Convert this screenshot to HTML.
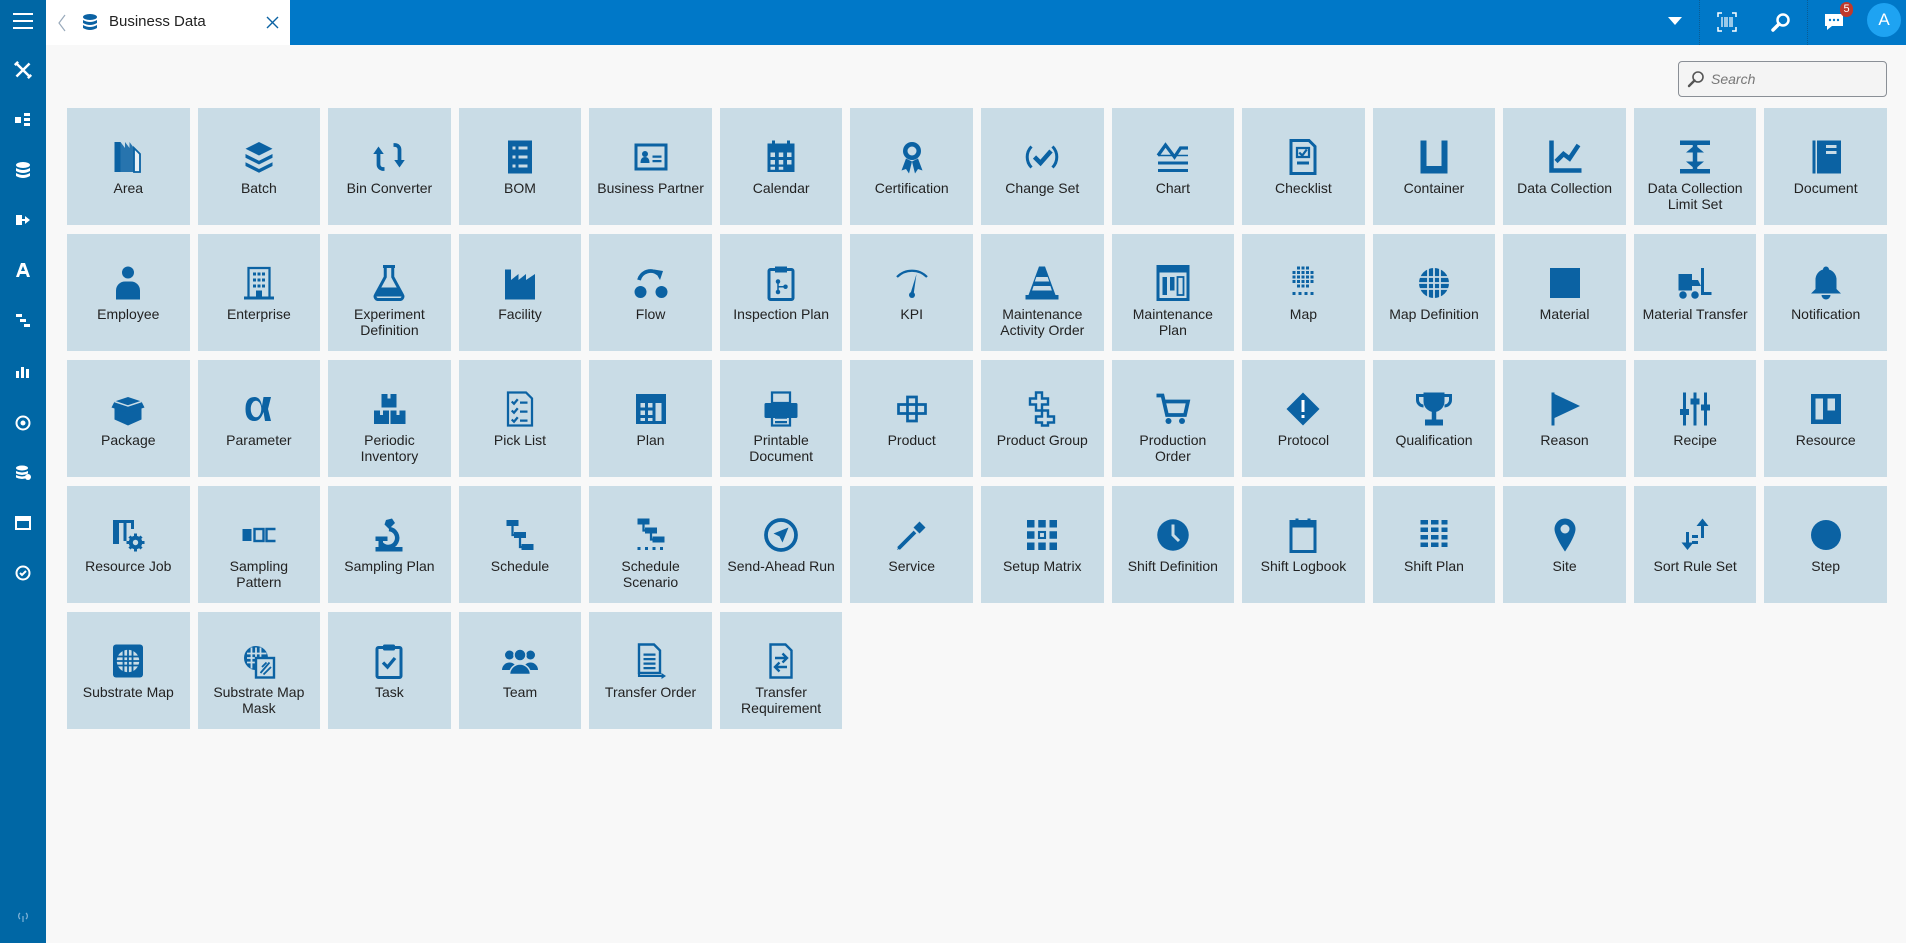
<!DOCTYPE html>
<html><head><meta charset="utf-8">
<style>
*{box-sizing:border-box;margin:0;padding:0}
body{width:1906px;height:943px;overflow:hidden;background:#f8f8f8;font-family:"Liberation Sans",sans-serif;position:relative}
#side{position:absolute;left:0;top:0;width:46px;height:943px;background:#0067a5}
#side svg{position:absolute;left:12px;width:22px;height:22px}
#top{position:absolute;left:46px;top:0;right:0;height:45px;background:#0078c8}
#tab{position:absolute;left:46px;top:0;width:244px;height:45px;background:#fff}
#tab .t{position:absolute;left:63px;top:13px;font-size:15px;color:#222}
.hdiv{position:absolute;top:0;height:45px;border-left:1px dotted #0a5c95}
#search{position:absolute;left:1678px;top:61px;width:209px;height:36px;border:1px solid #8a8f96;border-radius:4px;background:#f4f4f4}
#search span{position:absolute;left:32px;top:9px;font-size:14px;font-style:italic;color:#777}
#grid{position:absolute;left:67px;top:108px;width:1820px;display:grid;grid-template-columns:repeat(14,1fr);column-gap:8px;row-gap:9px}
.tile{height:117px;background:#c9dce6;position:relative;text-align:center}
.tile svg{position:absolute;left:50%;top:31px;margin-left:-18px;width:36px;height:36px;fill:#0b62a3;stroke:none}
.tile .l{position:absolute;left:0;right:0;top:72px;font-size:14px;line-height:16px;color:#222;white-space:nowrap}
.tile svg .s,.s{fill:none;stroke:#0b62a3;stroke-width:2}
</style></head><body>
<div id="top"></div>
<div id="tab">
<svg style="position:absolute;left:12px;top:14px" width="8" height="18" viewBox="0 0 8 18"><path d="M7 1L1 9l6 8" fill="none" stroke="#9ab" stroke-width="1.2"/></svg>
<svg style="position:absolute;left:36px;top:14px" width="16" height="17" viewBox="0 0 16 17"><ellipse cx="8" cy="3" rx="7" ry="3" fill="#0b62a3"/><path d="M1 6q7 4 14 0v3q-7 4-14 0zM1 11q7 4 14 0v3q-7 4-14 0z" fill="#0b62a3"/></svg>
<div class="t">Business Data</div>
<svg style="position:absolute;left:220px;top:16px" width="13" height="13" viewBox="0 0 13 13"><path d="M1 1l11 11M12 1L1 12" stroke="#0b62a3" stroke-width="1.4"/></svg>
</div>
<svg style="position:absolute;left:1668px;top:17px" width="14" height="9" viewBox="0 0 14 9"><path d="M0 0h14L7 8z" fill="#fff"/></svg>
<div class="hdiv" style="left:1699px"></div>
<svg style="position:absolute;left:1717px;top:12px" width="20" height="20" viewBox="0 0 20 20" fill="none" stroke="#fff" stroke-width="1.5"><path d="M1 5V1h4M15 1h4v4M19 15v4h-4M5 19H1v-4"/><path d="M5 5v10M8 5v10M10 5v10M13 5v10M15 5v10" stroke-width="1.2"/></svg>
<svg style="position:absolute;left:1771px;top:12px" width="20" height="20" viewBox="0 0 20 20"><circle cx="12" cy="8" r="5.5" fill="none" stroke="#fff" stroke-width="2.5"/><path d="M8 12l-6 6" stroke="#fff" stroke-width="3.5" stroke-linecap="round"/></svg>
<div class="hdiv" style="left:1807px"></div>
<svg style="position:absolute;left:1824px;top:12px" width="20" height="20" viewBox="0 0 20 20"><path d="M1 2h18v12H8l-5 4v-4H1z" fill="#fff"/><circle cx="6" cy="8" r="1.2" fill="#0078c8"/><circle cx="10" cy="8" r="1.2" fill="#0078c8"/><circle cx="14" cy="8" r="1.2" fill="#0078c8"/></svg>
<div style="position:absolute;left:1840px;top:2px;width:13px;height:15px;border-radius:7px;background:#c0392b;color:#fff;font-size:11px;text-align:center;line-height:15px">5</div>
<div style="position:absolute;left:1867px;top:3px;width:34px;height:34px;border-radius:50%;background:#1ea3f2;color:#fff;font-size:17px;text-align:center;line-height:34px">A</div>
<div id="search"><svg style="position:absolute;left:8px;top:8px" width="18" height="18" viewBox="0 0 18 18"><circle cx="11" cy="7" r="5" fill="none" stroke="#555" stroke-width="1.6"/><path d="M7.5 10.5L2 16" stroke="#555" stroke-width="2.4" stroke-linecap="round"/></svg><span>Search</span></div>
<div id="side">
<svg style="top:10px" viewBox="0 0 22 22"><path d="M1 4h20M1 11h20M1 18h20" stroke="#fff" stroke-width="2"/></svg>
<svg style="top:59px;width:18px;left:14px" viewBox="0 0 22 22"><path d="M3 3l16 16M19 3L3 19M1 5l4-4M17 21l4-4" stroke="#fff" stroke-width="3"/></svg>
<svg style="top:109px;width:16px;left:15px" viewBox="0 0 16 16" fill="#fff"><rect x="0" y="5" width="6" height="6"/><rect x="9" y="1" width="6" height="3"/><rect x="9" y="6" width="6" height="3"/><rect x="9" y="11" width="6" height="3"/></svg>
<svg style="top:159px;width:16px;left:15px" viewBox="0 0 16 16" fill="#fff"><ellipse cx="8" cy="3" rx="7" ry="3"/><path d="M1 6q7 4 14 0v3q-7 4-14 0zM1 11q7 4 14 0v3q-7 4-14 0z"/></svg>
<svg style="top:209px;width:16px;left:15px" viewBox="0 0 16 16" fill="#fff"><path d="M1 3h6v4h3V4l5 4-5 4V9H7v4H1z"/></svg>
<svg style="top:259px;width:16px;left:15px" viewBox="0 0 16 16" fill="#fff"><path d="M6 1h4l5 14h-3l-1-3H5l-1 3H1zM6 9h4L8 4z"/></svg>
<svg style="top:309px;width:16px;left:15px" viewBox="0 0 16 16" fill="#fff"><rect x="1" y="2" width="6" height="3"/><rect x="5" y="7" width="6" height="3"/><rect x="9" y="12" width="6" height="3"/></svg>
<svg style="top:360px;width:16px;left:15px" viewBox="0 0 16 16" fill="#fff"><rect x="1" y="8" width="3" height="7"/><rect x="6" y="4" width="3" height="11"/><rect x="11" y="6" width="3" height="9"/></svg>
<svg style="top:412px;width:16px;left:15px" viewBox="0 0 16 16"><circle cx="8" cy="8" r="6.5" fill="none" stroke="#fff" stroke-width="2"/><circle cx="8" cy="8" r="2.5" fill="#fff"/></svg>
<svg style="top:462px;width:16px;left:15px" viewBox="0 0 16 16" fill="#fff"><ellipse cx="7" cy="3" rx="6" ry="2.5"/><path d="M1 6q6 3 12 0v2.5q-6 3-12 0zM1 10q6 3 12 0v2.5q-6 3-12 0z"/><circle cx="13" cy="12" r="3"/></svg>
<svg style="top:512px;width:16px;left:15px" viewBox="0 0 16 16"><rect x="1" y="2" width="14" height="12" fill="none" stroke="#fff" stroke-width="2"/><rect x="1" y="2" width="14" height="4" fill="#fff"/></svg>
<svg style="top:562px;width:16px;left:15px" viewBox="0 0 16 16"><circle cx="8" cy="8" r="6.5" fill="none" stroke="#fff" stroke-width="2"/><path d="M5 8l2 2 4-4" stroke="#fff" stroke-width="2" fill="none"/></svg>
<svg style="top:905px;width:12px;left:17px" viewBox="0 0 12 12"><path d="M6 6v6M3 3a4 4 0 0 0 0 6M9 3a4 4 0 0 1 0 6" stroke="#7fb2d6" stroke-width="1.2" fill="none"/></svg>
</div>

<div id="grid">
<div class="tile"><svg viewBox="0 0 24 24"><path d="M3 2h4v20H3z"/><path d="M7 2l3 4V2l3 4V2l3 4v16H7z" opacity=".85"/><path d="M16 6l4 4v12h-4z" fill="#e8f0f5"/><path d="M16 6l4 4v12h-4z" class="s" style="stroke-width:1.2"/></svg><div class="l">Area</div></div>
<div class="tile"><svg viewBox="0 0 24 24"><path d="M12 2l9 4.5-9 4.5-9-4.5z"/><path d="M3 10l9 4.5 9-4.5v2.5l-9 4.5-9-4.5zM3 15.5l9 4.5 9-4.5V18l-9 4.5L3 18z"/></svg><div class="l">Batch</div></div>
<div class="tile"><svg viewBox="0 0 24 24"><path d="M9 20H8a3 3 0 0 1-3-3V9" class="s" style="stroke-width:2.5"/><path d="M1.5 10L5 5l3.5 5z"/><path d="M15 4h1a3 3 0 0 1 3 3v8" class="s" style="stroke-width:2.5"/><path d="M15.5 14L19 19l3.5-5z"/></svg><div class="l">Bin Converter</div></div>
<div class="tile"><svg viewBox="0 0 24 24"><rect x="4" y="1" width="16" height="22"/><g fill="#c9dce6"><rect x="7" y="5" width="2" height="2"/><rect x="11" y="5" width="6" height="2"/><rect x="7" y="11" width="2" height="2"/><rect x="11" y="11" width="6" height="2"/><rect x="7" y="17" width="2" height="2"/><rect x="11" y="17" width="6" height="2"/></g></svg><div class="l">BOM</div></div>
<div class="tile"><svg viewBox="0 0 24 24"><rect x="2" y="4" width="20" height="16" class="s"/><circle cx="8" cy="10" r="2"/><path d="M5 16q0-4 3-4t3 4z"/><rect x="13" y="11" width="6" height="1.5"/><rect x="13" y="14" width="6" height="1.5"/></svg><div class="l">Business Partner</div></div>
<div class="tile"><svg viewBox="0 0 24 24"><rect x="3" y="3" width="18" height="19"/><g fill="#c9dce6"><rect x="5" y="9" width="3" height="3"/><rect x="10.5" y="9" width="3" height="3"/><rect x="16" y="9" width="3" height="3"/><rect x="5" y="14" width="3" height="3"/><rect x="10.5" y="14" width="3" height="3"/><rect x="16" y="14" width="3" height="3"/><rect x="5" y="18.5" width="3" height="2"/><rect x="10.5" y="18.5" width="3" height="2"/></g><rect x="6" y="1" width="2" height="4"/><rect x="16" y="1" width="2" height="4"/></svg><div class="l">Calendar</div></div>
<div class="tile"><svg viewBox="0 0 24 24"><circle cx="12" cy="8" r="6"/><circle cx="12" cy="8" r="3" fill="#c9dce6"/><path d="M8 13l-3 8 3-1 2 3 2-8zM16 13l3 8-3-1-2 3-2-8z"/></svg><div class="l">Certification</div></div>
<div class="tile"><svg viewBox="0 0 24 24"><path d="M5 5a10 10 0 0 0 0 14M19 5a10 10 0 0 1 0 14" class="s"/><path d="M7 12l4 4 7-8" class="s" style="stroke-width:3"/></svg><div class="l">Change Set</div></div>
<div class="tile"><svg viewBox="0 0 24 24"><path d="M2 11l5-7 6 8 4-6h5" class="s" style="stroke-width:2.2"/><rect x="2" y="15" width="20" height="2"/><rect x="2" y="20" width="20" height="2"/><path d="M2 11h20" class="s" style="stroke-width:1"/></svg><div class="l">Chart</div></div>
<div class="tile"><svg viewBox="0 0 24 24"><path d="M4 1h12l4 4v18H4z" class="s"/><rect x="8" y="6" width="8" height="6" class="s" style="stroke-width:1.5"/><path d="M9.5 9l2 2 3-4" class="s" style="stroke-width:1.5"/><rect x="8" y="15" width="8" height="2"/></svg><div class="l">Checklist</div></div>
<div class="tile"><svg viewBox="0 0 24 24"><path d="M3 1h4v17h10V1h4v22H3z"/></svg><div class="l">Container</div></div>
<div class="tile"><svg viewBox="0 0 24 24"><path d="M3 1v20h20" class="s" style="stroke-width:3"/><path d="M6 15l5-5 4 3 6-9" class="s" style="stroke-width:3"/></svg><div class="l">Data Collection</div></div>
<div class="tile"><svg viewBox="0 0 24 24"><rect x="2" y="1" width="20" height="3"/><rect x="2" y="20" width="20" height="3"/><path d="M12 4v16" class="s" style="stroke-width:3"/><path d="M6 9l6-5 6 5zM6 15l6 5 6-5z"/></svg><div class="l">Data Collection<br>Limit Set</div></div>
<div class="tile"><svg viewBox="0 0 24 24"><rect x="3" y="1" width="2" height="22"/><rect x="6" y="1" width="16" height="22"/><rect x="12" y="4" width="7" height="2" fill="#c9dce6"/><rect x="12" y="8" width="7" height="2" fill="#c9dce6"/></svg><div class="l">Document</div></div>

<div class="tile"><svg viewBox="0 0 24 24"><circle cx="12" cy="5" r="4"/><path d="M4 23v-6a6 6 0 0 1 6-6h4a6 6 0 0 1 6 6v6z"/></svg><div class="l">Employee</div></div>
<div class="tile"><svg viewBox="0 0 24 24"><path d="M5 2h14v20H5z" class="s" style="stroke-width:1.5"/><g><rect x="8" y="5" width="2" height="2"/><rect x="11" y="5" width="2" height="2"/><rect x="14" y="5" width="2" height="2"/><rect x="8" y="9" width="2" height="2"/><rect x="11" y="9" width="2" height="2"/><rect x="14" y="9" width="2" height="2"/><rect x="8" y="13" width="2" height="2"/><rect x="11" y="13" width="2" height="2"/><rect x="14" y="13" width="2" height="2"/><rect x="10" y="17" width="4" height="5"/><rect x="2" y="21" width="20" height="2"/></g></svg><div class="l">Enterprise</div></div>
<div class="tile"><svg viewBox="0 0 24 24"><path d="M8 1h8M9.5 1v7L3 20a2 2 0 0 0 2 3h14a2 2 0 0 0 2-3L14.5 8V1" class="s"/><path d="M6 15h12l3 6H3z"/></svg><div class="l">Experiment<br>Definition</div></div>
<div class="tile"><svg viewBox="0 0 24 24"><path d="M2 23V3h4v7l5-4v4l5-4v4l6-4v17z"/></svg><div class="l">Facility</div></div>
<div class="tile"><svg viewBox="0 0 24 24"><circle cx="5" cy="18" r="4"/><circle cx="19" cy="18" r="4"/><path d="M4 10a8 8 0 0 1 13-4" class="s" style="stroke-width:2.5"/><path d="M14 3l6 1-2 6z"/></svg><div class="l">Flow</div></div>
<div class="tile"><svg viewBox="0 0 24 24"><rect x="4" y="3" width="16" height="20" rx="1" class="s"/><rect x="8" y="1" width="8" height="4"/><circle cx="10" cy="11" r="1.5"/><circle cx="10" cy="18" r="1.5"/><circle cx="15" cy="14.5" r="1.5"/><path d="M10 11v7M10 14.5h5" class="s" style="stroke-width:1"/></svg><div class="l">Inspection Plan</div></div>
<div class="tile"><svg viewBox="0 0 24 24"><path d="M2 8a14 14 0 0 1 20 0" class="s" style="stroke-width:1.5"/><path d="M15 6l-4 13 2 1z"/><circle cx="12" cy="20" r="2"/></svg><div class="l">KPI</div></div>
<div class="tile"><svg viewBox="0 0 24 24"><path d="M10 1h4l7 19H3z"/><path d="M8.2 8h7.6l1 3H7.2zM6.4 14h11.2l1 3H5.4z" fill="#c9dce6"/><rect x="1" y="20" width="22" height="3"/></svg><div class="l">Maintenance<br>Activity Order</div></div>
<div class="tile"><svg viewBox="0 0 24 24"><rect x="2" y="1" width="20" height="22" class="s"/><rect x="2" y="1" width="20" height="4"/><rect x="5" y="8" width="3" height="12"/><rect x="10" y="8" width="3" height="9"/><rect x="15" y="8" width="4" height="12" class="s" style="stroke-width:1.2"/></svg><div class="l">Maintenance<br>Plan</div></div>
<div class="tile"><svg viewBox="0 0 24 24"><g><rect x="8" y="1" width="2" height="2"/><rect x="11" y="1" width="2" height="2"/><rect x="14" y="1" width="2" height="2"/><rect x="5" y="4" width="2" height="2"/><rect x="8" y="4" width="2" height="2"/><rect x="11" y="4" width="2" height="2"/><rect x="14" y="4" width="2" height="2"/><rect x="17" y="4" width="2" height="2"/><rect x="5" y="7" width="2" height="2"/><rect x="8" y="7" width="2" height="2"/><rect x="11" y="7" width="2" height="2"/><rect x="14" y="7" width="2" height="2"/><rect x="17" y="7" width="2" height="2"/><rect x="5" y="10" width="2" height="2"/><rect x="8" y="10" width="2" height="2"/><rect x="11" y="10" width="2" height="2"/><rect x="14" y="10" width="2" height="2"/><rect x="17" y="10" width="2" height="2"/><rect x="8" y="13" width="2" height="2"/><rect x="11" y="13" width="2" height="2"/><rect x="14" y="13" width="2" height="2"/><rect x="5" y="18" width="2" height="2"/><rect x="9" y="18" width="2" height="2"/><rect x="13" y="18" width="2" height="2"/><rect x="17" y="18" width="2" height="2"/></g></svg><div class="l">Map</div></div>
<div class="tile"><svg viewBox="0 0 24 24"><circle cx="12" cy="12" r="10"/><path d="M8 2v20M12 2v20M16 2v20M2 8h20M2 12h20M2 16h20" stroke="#c9dce6" stroke-width="1.2"/></svg><div class="l">Map Definition</div></div>
<div class="tile"><svg viewBox="0 0 24 24"><rect x="2" y="2" width="20" height="20"/></svg><div class="l">Material</div></div>
<div class="tile"><svg viewBox="0 0 24 24"><rect x="1" y="6" width="9" height="11"/><path d="M10 10h4l2 4h-6z"/><path d="M17 2v17h6" class="s"/><circle cx="4" cy="20" r="2.5"/><circle cx="12" cy="20" r="2.5"/></svg><div class="l">Material Transfer</div></div>
<div class="tile"><svg viewBox="0 0 24 24"><path d="M12 1a2 2 0 0 1 2 2 7 7 0 0 1 5 7v6l3 3H2l3-3v-6a7 7 0 0 1 5-7 2 2 0 0 1 2-2z"/><path d="M9 20a3 3 0 0 0 6 0z"/></svg><div class="l">Notification</div></div>

<div class="tile"><svg viewBox="0 0 24 24"><path d="M12 4l9 3v12l-9 4-9-4V7z"/><path d="M3 7l-2 4 9 3 2-4zM21 7l2 4-9 3-2-4z"/><path d="M3 7l9 3 9-3" stroke="#c9dce6" stroke-width="1" fill="none"/></svg><div class="l">Package</div></div>
<div class="tile"><svg viewBox="0 0 24 24"><path d="M15 4l-1 6q-1-6-5-6-6 0-6 8t6 8q4 0 6-6l1 6h4l-2-8 2-8z"/><ellipse cx="10" cy="12" rx="3.5" ry="5.5" fill="#c9dce6"/></svg><div class="l">Parameter</div></div>
<div class="tile"><svg viewBox="0 0 24 24"><rect x="7" y="2" width="10" height="9"/><rect x="2" y="13" width="10" height="9"/><rect x="13" y="13" width="10" height="9"/><rect x="11" y="2" width="2" height="3" fill="#c9dce6"/><rect x="6" y="13" width="2" height="3" fill="#c9dce6"/><rect x="17" y="13" width="2" height="3" fill="#c9dce6"/></svg><div class="l">Periodic<br>Inventory</div></div>
<div class="tile"><svg viewBox="0 0 24 24"><path d="M4 1h12l4 4v18H4z" class="s" style="stroke-width:1.5"/><path d="M6.5 7l1.5 1.5 2.5-3M6.5 13l1.5 1.5 2.5-3M6.5 19l1.5 1.5 2.5-3" class="s" style="stroke-width:1.5"/><rect x="12" y="7" width="5" height="1.5"/><rect x="12" y="13" width="5" height="1.5"/><rect x="12" y="19" width="5" height="1.5"/></svg><div class="l">Pick List</div></div>
<div class="tile"><svg viewBox="0 0 24 24"><rect x="2" y="2" width="20" height="20"/><g fill="#c9dce6"><rect x="5" y="8" width="3" height="3"/><rect x="10" y="8" width="3" height="3"/><rect x="5" y="13" width="3" height="3"/><rect x="10" y="13" width="3" height="3"/><rect x="5" y="18" width="3" height="2"/><rect x="10" y="18" width="3" height="2"/><rect x="15" y="8" width="4" height="12"/></g></svg><div class="l">Plan</div></div>
<div class="tile"><svg viewBox="0 0 24 24"><rect x="6" y="1" width="12" height="7" class="s" style="stroke-width:1.5"/><rect x="1" y="8" width="22" height="10" rx="1"/><rect x="6" y="14" width="12" height="9" fill="#c9dce6" class="s" style="stroke-width:1.5"/><rect x="8" y="17" width="8" height="1.5"/><rect x="8" y="20" width="8" height="1.5"/></svg><div class="l">Printable<br>Document</div></div>
<div class="tile"><svg viewBox="0 0 24 24"><path d="M9 4h6v5h6v6h-6v5H9v-5H3V9h6z" class="s" style="stroke-width:1.8"/><path d="M9 9h6v6H9z" class="s" style="stroke-width:1.8"/></svg><div class="l">Product</div></div>
<div class="tile"><svg viewBox="0 0 24 24"><path d="M8 1h4v4h4v4h-4v4H8V9H4V5h4z" class="s" style="stroke-width:1.6"/><path d="M12 13h4v4h4v4h-4v2h-4v-2H8v-4h4z" class="s" style="stroke-width:1.6"/></svg><div class="l">Product Group</div></div>
<div class="tile"><svg viewBox="0 0 24 24"><path d="M1 3h4l3 13h12l2-9H6" class="s" style="stroke-width:2.5"/><circle cx="9" cy="20" r="2"/><circle cx="18" cy="20" r="2"/></svg><div class="l">Production<br>Order</div></div>
<div class="tile"><svg viewBox="0 0 24 24"><path d="M12 1l11 11-11 11L1 12z"/><rect x="11" y="6" width="2" height="8" fill="#fff"/><rect x="11" y="16" width="2" height="2" fill="#fff"/></svg><div class="l">Protocol</div></div>
<div class="tile"><svg viewBox="0 0 24 24"><path d="M5 1h14v6a7 7 0 0 1-14 0z"/><path d="M5 3H1v3a4 4 0 0 0 4 4M19 3h4v3a4 4 0 0 1-4 4" class="s"/><rect x="10.5" y="13" width="3" height="6"/><rect x="6" y="19" width="12" height="4"/></svg><div class="l">Qualification</div></div>
<div class="tile"><svg viewBox="0 0 24 24"><rect x="3" y="1" width="2" height="22"/><path d="M5 2l17 8-17 8z"/></svg><div class="l">Reason</div></div>
<div class="tile"><svg viewBox="0 0 24 24"><rect x="4" y="1" width="2" height="22"/><rect x="11" y="1" width="2" height="22"/><rect x="18" y="1" width="2" height="22"/><rect x="2" y="12" width="6" height="4"/><rect x="9" y="5" width="6" height="4"/><rect x="16" y="9" width="6" height="4"/></svg><div class="l">Recipe</div></div>
<div class="tile"><svg viewBox="0 0 24 24"><rect x="2" y="2" width="20" height="20"/><rect x="5" y="5" width="5" height="14" fill="#c9dce6"/><rect x="13" y="5" width="5" height="8" fill="#c9dce6"/></svg><div class="l">Resource</div></div>

<div class="tile"><svg viewBox="0 0 24 24"><path d="M2 2h14v6h-2V4h-3v12H9V4H6v14H2z"/><circle cx="17" cy="17" r="4.5"/><path d="M17 11v12M11 17h12M13 13l8 8M21 13l-8 8" stroke="#0b62a3" stroke-width="2"/><circle cx="17" cy="17" r="1.8" fill="#c9dce6"/></svg><div class="l">Resource Job</div></div>
<div class="tile"><svg viewBox="0 0 24 24"><rect x="1" y="8" width="6" height="8"/><rect x="9" y="8" width="6" height="8" class="s" style="stroke-width:1.6"/><path d="M23 8h-6v8h6" class="s" style="stroke-width:1.6"/></svg><div class="l">Sampling<br>Pattern</div></div>
<div class="tile"><svg viewBox="0 0 24 24"><path d="M10 2l4-1 2 3-4 4-3-3z"/><path d="M12 8a6 6 0 1 1-5 10" class="s" style="stroke-width:3"/><rect x="3" y="13" width="8" height="3"/><rect x="3" y="20" width="18" height="3"/><rect x="5" y="16" width="3" height="5"/></svg><div class="l">Sampling Plan</div></div>
<div class="tile"><svg viewBox="0 0 24 24"><rect x="3" y="2" width="8" height="4"/><rect x="8" y="10" width="8" height="4"/><rect x="13" y="18" width="8" height="4"/><path d="M7 6v6h1M12 14v6h1" class="s" style="stroke-width:1.5"/></svg><div class="l">Schedule</div></div>
<div class="tile"><svg viewBox="0 0 24 24"><rect x="3" y="1" width="8" height="4"/><rect x="8" y="7" width="8" height="4"/><rect x="13" y="13" width="8" height="4"/><path d="M7 5v4h1M12 11v4h1" class="s" style="stroke-width:1.5"/><rect x="3" y="20" width="2" height="2"/><rect x="8" y="20" width="2" height="2"/><rect x="13" y="20" width="2" height="2"/><rect x="18" y="20" width="2" height="2"/></svg><div class="l">Schedule<br>Scenario</div></div>
<div class="tile"><svg viewBox="0 0 24 24"><circle cx="12" cy="12" r="10" class="s" style="stroke-width:2.5"/><path d="M17 7l-10 4 4 2 2 4z"/></svg><div class="l">Send-Ahead Run</div></div>
<div class="tile"><svg viewBox="0 0 24 24"><path d="M3 21l11-11" class="s" style="stroke-width:2.5"/><path d="M13 7l4-4 4 4-4 4zM20 2l2 2"/><path d="M2 22l2-1-1-1z"/></svg><div class="l">Service</div></div>
<div class="tile"><svg viewBox="0 0 24 24"><rect x="2" y="2" width="5" height="5"/><rect x="9.5" y="2" width="5" height="5"/><rect x="17" y="2" width="5" height="5"/><rect x="2" y="9.5" width="5" height="5"/><rect x="10" y="10" width="4" height="4" class="s" style="stroke-width:1.4"/><rect x="17" y="9.5" width="5" height="5"/><rect x="2" y="17" width="5" height="5"/><rect x="9.5" y="17" width="5" height="5"/><rect x="17" y="17" width="5" height="5"/></svg><div class="l">Setup Matrix</div></div>
<div class="tile"><svg viewBox="0 0 24 24"><circle cx="12" cy="12" r="10.5"/><path d="M12 5v7l4 4" stroke="#c9dce6" stroke-width="2" fill="none"/></svg><div class="l">Shift Definition</div></div>
<div class="tile"><svg viewBox="0 0 24 24"><rect x="4" y="3" width="16" height="20" class="s"/><rect x="4" y="3" width="16" height="4"/><rect x="7" y="1" width="2" height="4"/><rect x="15" y="1" width="2" height="4"/></svg><div class="l">Shift Logbook</div></div>
<div class="tile"><svg viewBox="0 0 24 24"><rect x="3" y="2" width="5" height="3"/><rect x="10" y="2" width="5" height="3"/><rect x="17" y="2" width="4" height="3"/><rect x="3" y="7" width="5" height="3"/><rect x="10" y="7" width="5" height="3"/><rect x="17" y="7" width="4" height="3"/><rect x="3" y="12" width="5" height="3"/><rect x="10" y="12" width="5" height="3"/><rect x="17" y="12" width="4" height="3"/><rect x="3" y="17" width="5" height="3"/><rect x="10" y="17" width="5" height="3"/><rect x="17" y="17" width="4" height="3"/></svg><div class="l">Shift Plan</div></div>
<div class="tile"><svg viewBox="0 0 24 24"><path d="M12 1a7 7 0 0 1 7 7c0 5-7 15-7 15S5 13 5 8a7 7 0 0 1 7-7z"/><circle cx="12" cy="8" r="3" fill="#c9dce6"/></svg><div class="l">Site</div></div>
<div class="tile"><svg viewBox="0 0 24 24"><path d="M7 10v10" class="s" style="stroke-width:2"/><path d="M3 17l4 5 4-5z"/><path d="M17 14V3" class="s" style="stroke-width:2"/><path d="M13 6l4-5 4 5z"/><rect x="10" y="12" width="4" height="2"/><rect x="10" y="16" width="4" height="2"/></svg><div class="l">Sort Rule Set</div></div>
<div class="tile"><svg viewBox="0 0 24 24"><circle cx="12" cy="12" r="10"/></svg><div class="l">Step</div></div>

<div class="tile"><svg viewBox="0 0 24 24"><rect x="2" y="1" width="20" height="22" rx="2"/><circle cx="12" cy="12" r="7.5" fill="#c9dce6"/><path d="M9 4v16M12 4v16M15 4v16M4 9h16M4 12h16M4 15h16" stroke="#0b62a3" stroke-width="1.2"/></svg><div class="l">Substrate Map</div></div>
<div class="tile"><svg viewBox="0 0 24 24"><circle cx="10" cy="10" r="8"/><path d="M4 7h13M4 10h13M4 13h13M7 3v14M10 3v14M13 3v14" stroke="#c9dce6" stroke-width="1.2"/><rect x="10" y="10" width="12" height="13" fill="#c9dce6"/><rect x="10" y="10" width="12" height="13" class="s" style="stroke-width:1.6"/><path d="M13 20l6-7M14 16l3-3M15 21l5-5" stroke="#0b62a3" stroke-width="1.2"/></svg><div class="l">Substrate Map<br>Mask</div></div>
<div class="tile"><svg viewBox="0 0 24 24"><rect x="4" y="3" width="16" height="20" rx="1" class="s"/><rect x="8" y="1" width="8" height="4" rx="1"/><path d="M8 13l3 3 5-6" class="s" style="stroke-width:2.2"/></svg><div class="l">Task</div></div>
<div class="tile"><svg viewBox="0 0 24 24"><circle cx="5" cy="8" r="3"/><circle cx="19" cy="8" r="3"/><path d="M0 18a5 5 0 0 1 10 0zM14 18a5 5 0 0 1 10 0z"/><circle cx="12" cy="8" r="4" stroke="#c9dce6" stroke-width="1"/><path d="M5 21a7 7 0 0 1 14 0z" stroke="#c9dce6" stroke-width="1"/></svg><div class="l">Team</div></div>
<div class="tile"><svg viewBox="0 0 24 24"><path d="M4 1h10l4 4v15H4z" class="s" style="stroke-width:1.6"/><rect x="7" y="7" width="8" height="1.5"/><rect x="7" y="10" width="8" height="1.5"/><rect x="7" y="13" width="8" height="1.5"/><rect x="7" y="16" width="8" height="1.5"/><path d="M4 20v2h16" class="s" style="stroke-width:1.4"/><path d="M19 20l3 2-3 2z"/></svg><div class="l">Transfer Order</div></div>
<div class="tile"><svg viewBox="0 0 24 24"><path d="M5 1h10l4 4v18H5z" class="s" style="stroke-width:1.6"/><path d="M8 10h8M13 7l3 3-3 3M16 16H8M11 13l-3 3 3 3" class="s" style="stroke-width:1.6"/></svg><div class="l">Transfer<br>Requirement</div></div>
</div>
</body></html>
